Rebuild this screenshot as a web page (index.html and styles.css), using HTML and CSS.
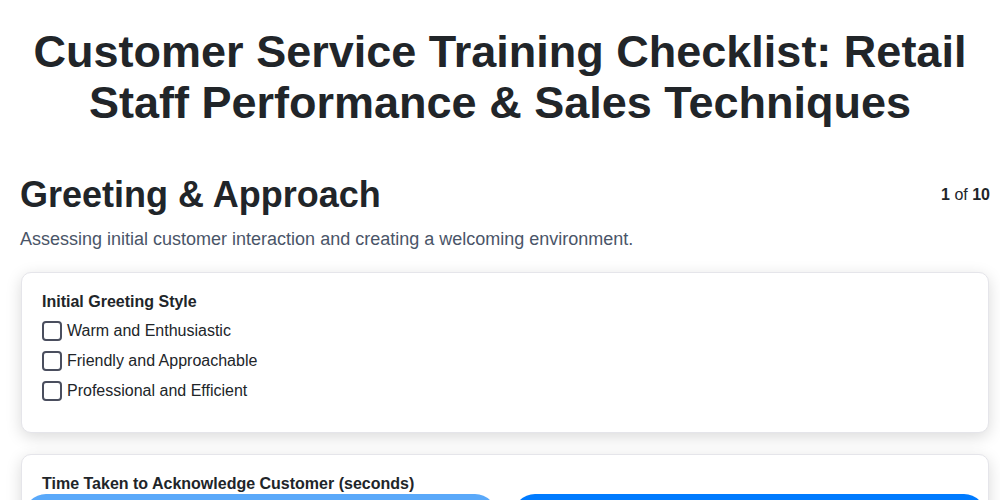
FILE: index.html
```html
<!DOCTYPE html>
<html lang="en">
<head>
    <meta charset="UTF-8">
    <meta name="viewport" content="width=device-width, initial-scale=1.0">
    <title>Customer Service Training Checklist</title>
    <link rel="stylesheet" href="styles.css">
</head>
<body>
    <header class="header">
        <h1 class="page-title">Customer Service Training Checklist: Retail Staff Performance &amp; Sales Techniques</h1>
    </header>

    <main class="container">
        <section class="step">
            <div class="step-header">
                <h2>Greeting &amp; Approach</h2>
                <div class="step-count"><strong>1</strong> of <strong>10</strong></div>
            </div>
            <p class="step-desc">Assessing initial customer interaction and creating a welcoming environment.</p>

            <div class="card">
                <div class="field-label">Initial Greeting Style</div>
                <label class="option"><input type="checkbox"> Warm and Enthusiastic</label>
                <label class="option"><input type="checkbox"> Friendly and Approachable</label>
                <label class="option"><input type="checkbox"> Professional and Efficient</label>
            </div>

            <div class="card">
                <div class="field-label">Time Taken to Acknowledge Customer (seconds)</div>
                <div class="btn-row">
                    <button class="btn btn-light">Previous</button>
                    <button class="btn btn-primary">Next</button>
                </div>
            </div>
        </section>
    </main>
</body>
</html>
```

FILE: styles.css
```css
body {
    margin: 0;
    font-family: "Liberation Sans", Arial, sans-serif;
    background-color: #fff;
    color: #212529;
}

.header {
    padding: 26px 20px 0;
}

.page-title {
    margin: 0 0 46px;
    font-size: 45px;
    line-height: 51px;
    text-align: center;
    color: #212529;
}

.container {
    padding: 0 10px 20px 20px;
}

.step-header {
    display: flex;
    justify-content: space-between;
    align-items: flex-start;
}

.step-header h2 {
    margin: 0;
    font-size: 36px;
    line-height: 42px;
}

.step-count {
    font-size: 16px;
    padding-top: 12px;
    color: #212529;
}

.step-desc {
    margin: 13px 0 22px;
    font-size: 18px;
    color: #4a5568;
}

.card {
    margin: 0 1px 21px;
    padding: 20px 20px 26px;
    border: 1px solid #e5e5ea;
    border-radius: 10px;
    background: #fff;
    box-shadow: 0 4px 16px rgba(0, 0, 0, 0.15);
}

.field-label {
    font-weight: bold;
    font-size: 16px;
    margin-bottom: 5px;
}

.option {
    display: flex;
    align-items: center;
    height: 30px;
    font-size: 16px;
}

.option input {
    appearance: none;
    -webkit-appearance: none;
    width: 20px;
    height: 20px;
    margin: 0 5px 0 0;
    border: 2px solid #4a4e5e;
    border-radius: 4px;
    background: #fff;
}

.btn-row {
    display: flex;
    gap: 16px;
    margin: -4px -18px 0;
}

.btn {
    flex: 1;
    height: 44px;
    border: none;
    border-radius: 22px;
    font-family: inherit;
    font-size: 16px;
    color: #fff;
    cursor: pointer;
}

.btn-light {
    background-color: #5aa9fa;
}

.btn-primary {
    background-color: #007bff;
}
```
